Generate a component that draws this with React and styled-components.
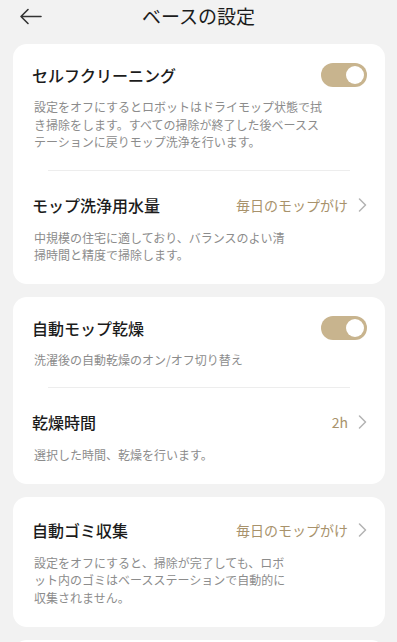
import React from "react";
import styled, { createGlobalStyle } from "styled-components";

const GlobalStyle = createGlobalStyle`
  html, body {
    margin: 0;
    padding: 0;
    background: #f2f2f2;
  }
  body {
    font-family: "Noto Sans CJK JP", "Noto Sans", sans-serif;
    -webkit-font-smoothing: antialiased;
  }
  * { box-sizing: border-box; }
`;

const Page = styled.div`
  width: 397px;
  min-height: 642px;
  background: #f2f2f2;
  display: flex;
  flex-direction: column;
`;

const Header = styled.header`
  position: relative;
  height: 32px;
  display: flex;
  align-items: center;
  justify-content: center;
  margin-bottom: 12px;
`;

const BackButton = styled.button`
  position: absolute;
  left: 19px;
  top: 8px;
  width: 24px;
  height: 17px;
  padding: 0;
  border: none;
  background: none;
  display: flex;
  align-items: center;
`;

const Title = styled.h1`
  margin: 0;
  font-size: 19px;
  font-weight: 400;
  color: #1c1c1c;
  line-height: 32px;
`;

const List = styled.div`
  display: flex;
  flex-direction: column;
  gap: 13px;
  padding: 0 12px 0 13px;
`;

const Card = styled.section`
  background: #ffffff;
  border-radius: 14px;
  display: flex;
  flex-direction: column;
`;

const Divider = styled.div`
  height: 1px;
  background: #ededed;
  margin: 0 35px;
`;

const Item = styled.div`
  padding: ${(p) => (p.$roomy ? "21px 18px 21px 19px" : "19px 18px 19px 19px")};
  ${Divider} + & {
    padding-top: 22px;
    padding-bottom: 20px;
  }
`;

const Row = styled.div`
  display: flex;
  align-items: center;
  justify-content: space-between;
  min-height: 24px;
`;

const Label = styled.span`
  font-size: 16px;
  font-weight: 500;
  color: #1c1c1c;
  line-height: 24px;
`;

const ValueLink = styled.span`
  display: flex;
  align-items: center;
  gap: 10px;
  font-size: 14px;
  font-weight: 400;
  color: #a8926b;
  line-height: 24px;
`;

const Desc = styled.p`
  margin: ${(p) => (p.$tight ? "11px" : "12px")} 0 0 2px;
  max-width: ${(p) => (p.$wide ? "292px" : "256px")};
  font-size: 12px;
  line-height: 17.5px;
  color: #8c8c8c;
  line-break: loose;
`;

const ToggleTrack = styled.div`
  width: 46px;
  height: 24px;
  border-radius: 12px;
  background: ${(p) => (p.$on ? "#c8b48e" : "#dcdcdc")};
  display: flex;
  align-items: center;
  justify-content: ${(p) => (p.$on ? "flex-end" : "flex-start")};
  padding: 0 3px;
`;

const Knob = styled.div`
  width: 18px;
  height: 18px;
  border-radius: 50%;
  background: #ffffff;
`;

const Toggle = ({ on }) => (
  <ToggleTrack $on={on}>
    <Knob />
  </ToggleTrack>
);

const Chevron = () => (
  <svg width="9" height="14" viewBox="0 0 9 14" fill="none">
    <path d="M1.5 1 L7.5 7 L1.5 13" stroke="#b3b3b3" strokeWidth="1.5" strokeLinecap="round" strokeLinejoin="round" />
  </svg>
);

const BackArrow = () => (
  <svg width="23" height="17" viewBox="0 0 23 17" fill="none">
    <path d="M2 8.5 H22 M9 1.5 L2 8.5 L9 15.5" stroke="#333333" strokeWidth="1.6" strokeLinecap="round" strokeLinejoin="round" />
  </svg>
);

export default function App() {
  return (
    <>
      <GlobalStyle />
      <Page>
        <Header>
          <BackButton aria-label="戻る">
            <BackArrow />
          </BackButton>
          <Title>ベースの設定</Title>
        </Header>
        <List>
          <Card>
            <Item>
              <Row>
                <Label>セルフクリーニング</Label>
                <Toggle on />
              </Row>
              <Desc $wide $tight>
                設定をオフにするとロボットはドライモップ状態で拭き掃除をします。すべての掃除が終了した後ベースステーションに戻りモップ洗浄を行います。
              </Desc>
            </Item>
            <Divider />
            <Item>
              <Row>
                <Label>モップ洗浄用水量</Label>
                <ValueLink>
                  毎日のモップがけ
                  <Chevron />
                </ValueLink>
              </Row>
              <Desc>中規模の住宅に適しており、バランスのよい清掃時間と精度で掃除します。</Desc>
            </Item>
          </Card>
          <Card>
            <Item>
              <Row>
                <Label>自動モップ乾燥</Label>
                <Toggle on />
              </Row>
              <Desc $wide $tight>洗濯後の自動乾燥のオン/オフ切り替え</Desc>
            </Item>
            <Divider />
            <Item>
              <Row>
                <Label>乾燥時間</Label>
                <ValueLink>
                  2h
                  <Chevron />
                </ValueLink>
              </Row>
              <Desc>選択した時間、乾燥を行います。</Desc>
            </Item>
          </Card>
          <Card>
            <Item $roomy>
              <Row>
                <Label>自動ゴミ収集</Label>
                <ValueLink>
                  毎日のモップがけ
                  <Chevron />
                </ValueLink>
              </Row>
              <Desc>設定をオフにすると、掃除が完了しても、ロボット内のゴミはベースステーションで自動的に収集されません。</Desc>
            </Item>
          </Card>
          <Card>
            <Item>
              <Row>
                <Label>&nbsp;</Label>
              </Row>
            </Item>
          </Card>
        </List>
      </Page>
    </>
  );
}
